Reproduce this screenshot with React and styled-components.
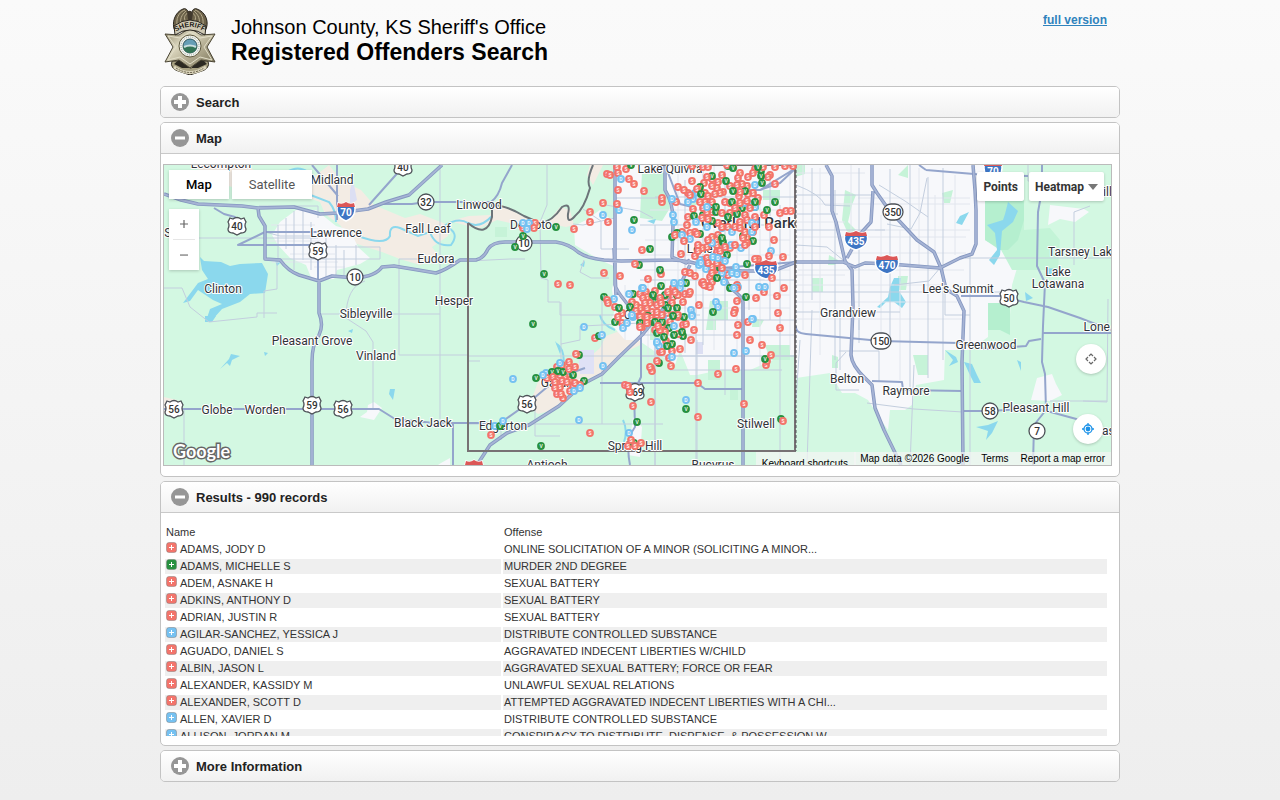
// external
import React, {useState} from 'react';
import styled, {createGlobalStyle} from 'styled-components';

const App = () => {
  return (
    <>
      <GlobalStyle />
      <Page>
        <Header>
          <Badge />
          <Title>
            <small>Johnson County, KS Sheriff's Office</small>
            Registered Offenders Search
          </Title>
          <FullVersion href="#full">full version</FullVersion>
        </Header>
        <Section title="Search" />
        <Section title="Map" defaultOpen>
          <OffenderMap />
        </Section>
        <Section title="Results - 990 records" defaultOpen>
          <Results />
        </Section>
        <Section title="More Information" />
      </Page>
    </>
  );
};

export default App;

const Section = ({title, defaultOpen = false, children}) => {
  const [open, setOpen] = useState(defaultOpen);
  const showBody = open && Boolean(children);
  return (
    <Panel>
      <PanelHeading>
        <PanelButton type="button" aria-expanded={open} $open={showBody} onClick={() => setOpen(!open)}>
          <svg width="18" height="18" viewBox="0 0 18 18" aria-hidden="true">
            <circle cx="9" cy="9" r="9" fill="#969696" />
            <path d={open ? 'M4 9H14' : 'M3 9H15M9 3V15'} stroke="#fff" strokeWidth={open ? 3 : 4} />
          </svg>
          {title}
        </PanelButton>
      </PanelHeading>
      {showBody && <PanelBody>{children}</PanelBody>}
    </Panel>
  );
};

const Badge = () => (
  <svg width="52" height="68" viewBox="0 0 52 68" role="img" aria-label="Sheriff badge">
    <defs>
      <linearGradient id="metal" x1="0" x2="1" y1="0" y2="1">
        <stop offset="0" stopColor="#8a8266" />
        <stop offset=".35" stopColor="#dcd7bf" />
        <stop offset=".6" stopColor="#b5ae93" />
        <stop offset="1" stopColor="#777055" />
      </linearGradient>
    </defs>
    <path d="M11 24C7 16 11 5 19 2C22 1 24 3 24 6L26 4L28 6C28 3 30 1 33 2C42 5 46 16 41 24Z" fill="#6b6149" stroke="#29241c" />
    <path d="M13 17C12 9 17 4 21 3M17 18C15 10 20 6 22 4M22 15C19 11 21 7 24 6M39 17C40 9 35 4 31 3M35 18C37 10 32 6 30 4M30 15C33 11 31 7 28 6" fill="none" stroke="#b8ad8d" strokeWidth="1" />
    <path d="M23 5Q26 2 29 6L28 12Q26 17 24 12Z" fill="#41392d" />
    <path d="M8 54Q5 62 17 65L26 68L35 65Q47 62 44 54Z" fill="#a8a182" stroke="#2f2b23" />
    <path d="M10 57L17 51L23 57L27 62L31 55L37 51L43 57L34 61H18Z" fill="#2c2922" />
    <path d="M1 27L15 28L26 21L37 28L51 27L43 40L51 55L37 53L26 61L15 53L1 55L9 40Z" fill="url(#metal)" stroke="#4a4534" />
    <path d="M4 29L16 31L26 25L36 31L48 29L40 40L48 53L36 50L26 57L16 50L4 53L12 40Z" fill="none" stroke="#e2dec8" />
    <path d="M10 19Q26 7 42 19L41 28Q26 18 11 28Z" fill="#cfc9b4" stroke="#29251e" />
    <path id="arch" d="M12 25Q26 15 41 25" fill="none" />
    <text fontFamily="Liberation Sans, sans-serif" fontSize="7" fontWeight="700" fill="#1d1a15">
      <textPath href="#arch" startOffset="0">SHERIFF</textPath>
    </text>
    <path d="M10 60Q26 71 42 60" fill="none" stroke="#dbd5bd" strokeWidth="3" />
    <path d="M12 61Q26 70 40 61" fill="none" stroke="#69624c" strokeDasharray="2 1" />
    <circle cx="26" cy="39" r="11" fill="#f7f7ef" stroke="#5f593f" />
    <circle cx="26" cy="39" r="9" fill="none" stroke="#899ba1" strokeDasharray="1 1" />
    <circle cx="26" cy="39" r="7" fill="#669eb5" stroke="#31565e" />
    <path d="M19 39H33Q32 46 26 46Q20 46 19 39Z" fill="#337455" />
    <path d="M20 40Q26 37 32 40" fill="none" stroke="#cadfe1" strokeWidth="2" />
  </svg>
);

// pin kinds: S = sex offender, D = drug offender, V = violent offender
const pinColors = {S: '#f3746b', D: '#75c1f1', V: '#279140'};

const pins = {
  V: `631,165 634,220 650,249 639,265 556,227 523,236 515,247 544,274 728,166 733,168 712,176 726,181 758,167 761,171
    761,176 762,183 700,187 701,194 733,191 745,191 732,202 716,207 716,212 703,215 709,210 712,221 755,202 755,207
    742,208 767,210 775,202 728,217 737,214 694,216 700,234 677,233 672,237 722,238 723,242 743,236 753,241 727,255
    747,264 717,278 720,268 730,288 746,297 713,312 684,317 686,283 677,308 668,308 665,305 665,295 653,295 661,286
    660,270 677,295 604,297 619,308 633,294 630,307 655,302 533,324 599,336 615,322 640,323 655,322 657,333 579,355
    552,372 558,371 563,372 536,378 573,375 584,381 659,363 637,422 541,446 500,426 634,443 765,359 686,409 781,419
    672,344 667,346 683,336 682,332 674,335 664,337 663,327 669,328 673,316 653,322 662,322 648,316`,
  D: `621,179 603,215 619,210 632,230 523,223 529,223 527,229 642,288 629,294 755,185 693,199 692,195 695,193 672,199
    673,215 674,222 696,222 707,227 732,232 707,207 745,203 750,204 755,207 752,223 755,222 752,232 722,228 690,239
    682,235 688,202 719,247 712,243 731,245 741,248 722,242 700,260 701,263 713,257 718,258 725,261 699,265 706,269
    722,273 724,282 736,267 732,273 737,274 759,287 765,287 738,287 734,288 771,251 716,302 718,307 691,310 692,316
    681,283 680,288 674,283 643,288 655,300 752,319 614,299 632,315 633,317 584,327 602,335 627,323 623,328 632,316
    657,343 560,363 543,375 546,373 513,379 574,391 580,388 603,366 579,420 495,426 503,421 629,433 753,319 734,353
    746,351 686,400 672,357 657,342 659,346 674,326 692,315 663,317`,
  S: `607,174 610,175 617,167 618,173 626,169 629,179 634,184 644,191 618,190 603,203 590,212 590,222 608,222 617,204
    574,229 642,250 635,264 604,273 620,276 648,279 558,284 570,285 523,228 535,223 534,228 692,166 703,167 708,167
    727,165 733,167 748,177 753,173 763,167 755,169 775,167 785,166 793,166 770,175 775,184 768,177 678,187 684,190
    692,181 707,177 712,179 718,182 704,183 712,186 717,188 730,186 738,178 737,185 722,175 740,173 747,186 742,184
    740,192 739,196 748,194 753,193 723,192 720,193 705,193 708,196 697,189 688,193 690,195 715,194 700,202 705,202
    730,203 725,202 740,203 747,201 735,208 750,208 757,202 758,198 712,202 703,208 722,213 730,213 737,212 745,215
    747,220 740,222 735,227 728,227 722,227 718,223 753,232 755,227 747,237 745,232 740,228 712,212 707,212 702,218
    708,219 688,217 687,225 693,209 676,202 662,198 662,202 675,235 682,232 684,241 690,233 695,232 697,234 681,254
    755,217 764,215 769,227 774,240 769,256 783,257 772,278 784,288 777,296 764,292 756,298 778,313 780,213 786,211
    791,211 755,259 758,259 745,275 737,301 735,310 734,313 699,305 690,292 685,294 689,294 698,245 702,248 698,251
    707,247 708,240 712,237 718,235 716,240 717,245 722,247 720,251 725,247 717,252 730,248 735,245 745,245 743,238
    747,243 695,256 703,260 707,258 708,263 712,267 717,263 722,268 722,260 712,273 710,277 718,275 703,282 704,285
    710,287 707,286 712,282 702,283 685,272 690,273 695,276 717,273 728,275 737,285 737,288 732,288 661,274 673,288
    675,292 668,292 655,291 665,296 673,297 678,295 683,302 647,297 643,298 660,298 645,303 650,303 657,305 661,303
    672,303 647,308 652,312 657,312 643,313 662,315 667,313 673,315 678,317 647,317 640,317 607,300 608,303 615,307
    622,313 618,317 636,305 640,308 632,302 636,311 640,294 646,292 650,297 595,338 622,323 640,327 647,323 660,352
    576,354 569,362 575,367 562,365 557,367 569,369 547,378 553,377 560,375 565,377 570,380 555,382 562,381 567,382
    575,383 580,385 577,388 555,388 560,387 557,394 561,394 563,398 570,391 573,387 651,368 657,361 625,385 628,386
    630,392 633,406 651,402 590,433 491,435 631,440 628,446 635,446 641,443 738,325 748,322 780,328 737,335 750,340
    762,345 771,355 767,361 766,365 736,369 718,374 698,383 698,417 744,404 783,421 671,366 650,367 652,371 669,358
    662,352 672,351 680,349 691,340 678,334 694,330 683,325 686,324 660,330 655,330 665,332 662,325 670,322 678,315
    657,315 643,317 647,323 642,327 651,318 658,326 666,341`,
};

const pinList = Object.entries(pins).flatMap(([kind, list]) =>
  list.trim().split(/\s+/).map((point) => {
    const [x, y] = point.split(',').map(Number);
    return {kind, x, y};
  })
);

// mix the kinds so that no colour lies wholly over another
const order = (pin) => (pin.x * 31 + pin.y * 57) % 101;
pinList.sort((a, b) => order(a) - order(b));

const towns = [
  ['Lecompton', 221, 168], ['Midland', 332, 184], ['Lawrence', 336, 237], ['Fall Leaf', 428, 233], ['Linwood', 479, 209],
  ['Eudora', 436, 263], ['Clinton', 223, 293], ['Hesper', 454, 305], ['Sibleyville', 366, 318], ['Pleasant Grove', 312, 345],
  ['Vinland', 376, 360], ['Globe', 217, 414], ['Worden', 265, 414], ['Black Jack', 423, 427], ['Edgerton', 503, 430],
  ['De Soto', 531, 229], ['Gardner', 562, 387], ['Spring Hill', 635, 450], ['Antioch', 547, 469], ['Bucyrus', 713, 469],
  ['Stilwell', 756, 428], ['Lake Quivira', 670, 173], ['Lenexa', 706, 253], ['Olathe', 641, 319], ['Grandview', 848, 317],
  ['Belton', 847, 383], ['Raymore', 906, 395], ["Lee's Summit", 958, 293], ['Greenwood', 986, 349], ['Pleasant Hill', 1036, 412],
  ['Lake', 1058, 276], ['Lotawana', 1058, 288], ['Tarsney Lake', 1083, 256], ['Lone Jack', 1111, 331], ['Blue Hill', 1090, 196],
  ['Strasburg', 1113, 435], ['Stull', 176, 237],
];

const usRoutes = [['40', 237, 226], ['40', 403, 167], ['59', 318, 251], ['59', 312, 405], ['56', 174, 409], ['56', 343, 409], ['56', 527, 404], ['169', 635, 392], ['50', 1009, 298]];
const stateRoutes = [['32', 426, 202], ['10', 355, 277], ['10', 524, 243], ['350', 893, 212], ['150', 881, 341], ['58', 990, 411], ['7', 1037, 431]];
const interstates = [['70', 346, 211], ['435', 766, 269], ['435', 856, 240], ['470', 887, 264], ['70', 993, 170], ['35', 474, 469]];

const freeways = `M164 194L181 200L198 204L242 206L258 208L294 207L320 214L337 213L368 209L386 202L409 195L442 165
  M258 208L259 216L265 226V259L280 260Q288 271 299 275L319 281L332 276L356 278Q376 276 382 267L394 266L436 273Q446 270 460 260H476
  Q484 258 488 249Q493 242 505 242H556Q569 244 578 252Q586 258 604 260L621 261L672 260Q680 260 690 262L710 267L742 271H773L796 262L843 262L855 267L865 263L890 264L940 268L960 258L972 254L976 244V210L975 190L973 165
  M319 281V313Q324 325 319 335Q312 344 312 362V465
  M615 165V285Q616 290 625 301L640 320M616 295L614 248
  M665 165L665 190Q674 204 673 225L672 257L686 263L690 260M690 265L680 285L660 313L643 334L620 356L602 374L583 384L559 406L529 425L507 433L490 445L477 465
  M826 165L832 176V211L836 222L845 261L852 270L853 306L851 355Q852 366 865 378L872 385L875 408L884 430L901 465
  M872 165V185L877 193L889 210L917 240L934 252L941 268L946 289L957 296L964 311L962 362L963 465
  M743 465V302Q742 296 730 288L724 276L722 268
  M873 191L871 222L861 233L847 258`;

const highways = `M312 165L338 196M337 165V220M164 409H379L395 419L434 423H468M453 423V465M318 245V281M318 281V245H238L265 232H318
  M214 208L224 214L235 217L242 229M369 205L402 168M379 204H412L426 202H491Q499 196 502 183L512 165
  M503 421L527 404L546 388L568 374L585 368M634 392L641 377V325M634 392L635 427Q625 440 630 465
  M468 423H503M600 383H697L705 389H744M796 326Q795 333 806 334L881 341L958 343L986 349L1026 346L1029 341L1041 339
  M961 296H1001L1024 302L1048 307L1080 318L1111 330M1042 165V190L1038 212L1037 266L1045 283L1043 326L1042 362L1045 374L1046 410L1034 425L1033 465
  M1043 333H1111M963 411L990 411L1036 408L1080 420M872 381L902 382L903 390L962 391
  M926 170L986 175L1028 176M926 170L919 165M720 268L796 262M796 168L760 190H745L738 195M665 165L680 204L696 208M760 190L780 183L796 168`;

const streets = `M259 206H318V218M265 232L280 236H313M278 225V258M286 218V249M294 211V270M303 211V260M311 222V270M326 231V279M336 245V275M344 250V275M356 245V265
  M265 259H380V247H325M265 259L277 260L277 289L264 291V318M164 288H182L190 307L209 322L257 317V313H277
  M399 259V355H468M440 165V419M365 281Q346 287 346 318L366 331L373 342V409M321 314H440M399 259H430L440 261
  M177 238H318M184 409V465M547 165V205L540 222L541 278L548 280V302L560 302V315H700M525 259H510L468 261
  M561 302V374M480 361H468M468 356H796M580 326V340L561 344M583 326L640 323M602 300V424M468 424H663M501 425V440M535 410V436H560
  M640 320H797M655 225V465M696 260V465M725 165V395M780 205V465M796 292H1000M796 312H900M640 335H795M640 356H795M655 339V465
  M670 370H782M665 383H700M697 340V465M796 195H872M796 214H838M796 230H885M812 168V300M835 190V360M859 168V330M890 169V340M910 165V390
  M928 177V378M943 168V360M970 255V465M945 289V315H970M965 258H1111M1028 165V181H1074V195M1074 265V212L1090 206M1108 299L1107 402L1083 401
  M1050 401H1107M846 352L836 363V390H859M839 351H879V382M840 318V370M812 310L807 465M859 320V343M914 365L910 465
  M867 403L914 409L963 412M800 340L796 400M770 180V320M749 182V310M703 165V345M685 180V353M640 280H795M640 225H795M655 197H795M615 198H665
  M796 185Q820 194 825 205L850 206M796 245L827 247L843 260M879 185L905 201L928 217M887 224L911 229L920 213L927 178M894 285L929 281L940 268
  M615 218L583 225L573 224M600 204L640 211L653 218M583 209L601 221V249H629M584 260L580 272L591 278H609`;

const localGrid = `M803 165V330M820 168V355M851 165V255M881 215V335M900 230V380M919 168V267M935 195V250M955 175V255M796 173H865M796 204H970
  M796 222H845M796 237H966M796 253H966M796 275H845M796 285H946M796 302H957M796 319H965M858 198H970M875 230H970M798 270H964
  M678 165V340M714 165V350M737 165V350M760 200V370M790 165V350M650 210H790M645 240H790M640 255H790M640 270H790M640 295H790M640 308H790
  M625 285V340M648 280V360M665 280V360M612 310H680M271 225H315M267 241H320M290 254H335M272 262H338M314 267H345`;

const OffenderMap = () => (
  <MapBox>
    <MapDrawing viewBox="164 165 947 300" preserveAspectRatio="xMidYMid slice" role="img" aria-label="Map of Johnson County">
      <rect x="164" y="165" width="947" height="300" fill="#d3f8e2" />
      <g fill="#f3ece4">
        <path d="M192 165H245L258 172L280 180L315 176L329 165L342 181L361 190L374 205L405 218L420 214L446 224L448 236L432 247L440 258L420 265L400 259L382 252L354 243L340 225L325 214L320 202L300 195L245 190L220 184Z" />
        <path d="M450 221L469 216L490 215L493 205L502 205L524 217L548 222L560 207L570 210L574 225L566 227L545 223H510L497 220L480 228L468 226Z" />
        <path d="M590 165H603L593 185L587 175ZM540 376L585 361L600 348L606 336L625 329L643 329L640 345L620 355L600 374L580 382L553 410L538 414L529 407Z" />
        <path d="M164 397L177 400L181 406L178 414H164Z" />
      </g>
      <g fill="#f7f8fb">
        <path d="M296 210H316L336 226L350 230L358 247L370 258L360 264L337 270L334 279L312 280L306 265L290 258L278 245L272 235L280 222Z" />
        <path d="M574 226L586 220L600 210L609 218H616V165H985V230H1020V258L1012 285L1010 315L988 316V337L970 350L945 350L944 380L916 385L912 405L905 410H890L888 430L881 420L868 400L855 393H842L830 373L796 378V355H785L750 370H720L697 375H690L680 350L675 365L660 355L638 340L625 340L610 323L615 310L612 290L616 267L600 260L575 245Z" />
        <path d="M1037 378L1052 374L1056 384L1062 395L1050 401L1031 400Z" />
        <path d="M368 405L374 402L382 408L374 420L360 417L367 412ZM441 463L450 458V465H438ZM633 417L642 427L640 457L628 455Z" />
      </g>
      <path d="M578 350H594V374H580Z" fill="#dfe1f6" />
      <path d="M696 342H703V354H696ZM350 190L353 180L357 200L350 205Z" fill="#dcdff3" />
      <g fill="#c6f3d8">
        <path d="M642 171L664 170L670 208L662 221L640 218ZM710 301H728V320H716V330H706ZM690 198H698V205H690ZM845 190L856 195L852 205L848 222L856 230L849 236L842 220ZM829 255L838 260L835 265H828Z" />
        <path d="M796 165H805V174L795 177ZM898 175L908 165V178ZM942 193L953 190L950 203H944ZM898 276H908L906 290H898ZM812 278H823V292H812ZM832 355L838 357V368H832ZM913 355H928V375H918ZM763 190H780V200H763ZM765 345H790V360H770ZM495 227H507V237H495Z" />
        <path d="M650 320H660V340H650ZM730 390H738V400H730ZM708 360H720V380H708ZM753 318L764 320L760 327H752Z" />
      </g>
      <path d="M985 200H1024V230L1050 228L1060 240L1058 270H1012L1000 248L985 240Z" fill="#c3f4d7" />
      <path d="M985 200H1024V220L1018 240L1008 250H1000L985 240ZM988 303H1010V335L1000 330H988Z" fill="#b5efcf" />
      <path d="M1050 205L1084 209L1089 212L1075 222L1060 219L1048 225Z" fill="#f7f8fb" />
      <g fill="#8bd8ed">
        <path d="M200 257L204 261L221 262L230 266L240 264L262 263L268 274L265 293L250 294L240 302L222 309L213 319L207 318L210 309L222 304L213 300L198 290L190 301L183 303L189 295L198 283L208 279L202 270Z" />
        <path d="M894 278L901 278L899 291L906 302L902 308L894 302L886 302L880 308L877 307L888 297L890 287Z" />
        <path d="M1005 214L1008 202L1018 211L1013 222L1002 231L1000 255L994 265L989 260L997 250L995 233L987 225L1003 220Z" />
        <path d="M964 362L972 364L977 375L981 383H974L969 373ZM945 350L956 357L958 362L949 366L953 360ZM976 427L988 425L998 421L992 433L986 440L988 431ZM231 354L240 356L232 360L230 366L227 363L220 369L229 359ZM390 389H395L393 400L389 394ZM205 316H216L212 322H205ZM960 216L969 212L962 225L956 223Z" />
        <path d="M647 221L656 219L654 224ZM580 265L585 261L584 267ZM348 331L353 329L352 333ZM264 352L268 353L265 356ZM274 258L281 262L277 266ZM1046 268L1058 269L1054 276L1046 274ZM1025 292L1033 298L1026 301ZM1017 360L1021 362V371ZM555 341L562 349L560 354Z" />
      </g>
      <path d="M287 172Q298 165 308 172M308 194L329 202Q336 210 336 222M358 236Q385 246 390 236Q389 224 400 228L418 236L430 232Q435 247 451 245Q461 232 444 226Q458 217 468 223M468 223Q480 229 492 216M557 344Q566 350 563 370M623 420Q628 430 624 442M618 448L625 445M600 315Q602 325 615 330" fill="none" stroke="#8bd8ed" strokeWidth="2" />
      <path d={localGrid} fill="none" stroke="#e2e6ee" />
      <path d={streets} fill="none" stroke="#c3cede" />
      <path d={highways} fill="none" stroke="#94a5cc" strokeWidth="2" strokeLinejoin="round" />
      <path d={freeways} fill="none" stroke="#8597c0" strokeWidth="3.5" strokeLinejoin="round" />
      <path d={freeways} fill="none" stroke="#a6b4d5" strokeWidth="1.8" strokeLinejoin="round" />
      <path d="M468 223Q487 239 492 217V205Q506 205 524 216L540 223Q552 222 562 207Q571 202 568 214Q567 225 575 216Q584 209 590 188Q586 181 593 165" fill="none" stroke="#6c7479" strokeWidth="2" />
      <path d="M468 223L468 451H795V165M796 165H655" fill="none" stroke="#777174" strokeWidth="2" />
      <path d="M796 165V451" fill="none" stroke="#535559" strokeWidth="1" strokeDasharray="3 2" />

      {towns.map(([name, x, y]) => <TownLabel key={name} x={x} y={y}>{name}</TownLabel>)}
      <CityLabel x="748" y="228">Overland Park</CityLabel>

      {usRoutes.map(([number, x, y]) => (
        <g key={number + x} transform={`translate(${x} ${y})`}>
          <path d="M-7-8L-4-7Q0-10 4-7L7-8L9-4Q7-1 9 3Q9 7 4 7L0 9L-4 7Q-9 7-9 3Q-7-1-9-4Z" fill="#fff" stroke="#4d5157" strokeWidth="1.3" />
          <RouteNumber y="4">{number}</RouteNumber>
        </g>
      ))}
      {stateRoutes.map(([number, x, y]) => (
        <g key={number + x} transform={`translate(${x} ${y})`}>
          <rect x={number.length > 2 ? -10 : -8} y="-8" width={number.length > 2 ? 20 : 16} height="16" rx="8" fill="#fff" stroke="#4d5157" strokeWidth="1.3" />
          <RouteNumber y="4">{number}</RouteNumber>
        </g>
      ))}
      {interstates.map(([number, x, y]) => (
        <g key={number + x} transform={`translate(${x} ${y})`}>
          {number.length > 2 ? (
            <>
              <path d="M-10-8Q-5-6 0-9Q5-6 10-8Q16 5 0 10Q-16 5-10-8Z" fill="#3d75c4" stroke="#fff" strokeWidth="1.5" />
              <path d="M-10-8Q-5-6 0-9Q5-6 10-8L11-4H-11Z" fill="#dc5757" />
            </>
          ) : (
            <>
              <path d="M-8-8Q-4-6 0-9Q4-6 8-8Q12 5 0 10Q-12 5-8-8Z" fill="#3d75c4" stroke="#fff" strokeWidth="1.5" />
              <path d="M-8-8Q-4-6 0-9Q4-6 8-8L9-4H-9Z" fill="#dc5757" />
            </>
          )}
          <ShieldNumber y="5">{number}</ShieldNumber>
        </g>
      ))}

      {pinList.map(({kind, x, y}) => (
        <g key={`${kind}${x},${y}`}>
          <circle cx={x} cy={y} r="3.9" fill={pinColors[kind]} />
          <PinLetter x={x} y={y + 2}>{kind}</PinLetter>
        </g>
      ))}
    </MapDrawing>

    <MapTypes>
      <MapButton type="button" $active>Map</MapButton>
      <MapButton type="button">Satellite</MapButton>
    </MapTypes>
    <ZoomControl>
      <button type="button" aria-label="Zoom in"><Glyph d="M5 9H13M9 5V13" /></button>
      <button type="button" aria-label="Zoom out"><Glyph d="M5 9H13" /></button>
    </ZoomControl>
    <LayerButtons>
      <LayerButton type="button">Points</LayerButton>
      <LayerButton type="button">
        Heatmap
        <svg width="10" height="6" viewBox="0 0 10 6" aria-hidden="true"><path d="M0 0H10L5 6Z" fill="#777" /></svg>
      </LayerButton>
    </LayerButtons>
    <CameraButton type="button" aria-label="Map camera controls">
      <Glyph d="M7 6L9 4L11 6M12 7L14 9L12 11M11 12L9 14L7 12M6 11L4 9L6 7" />
    </CameraButton>
    <LocateButton type="button" aria-label="Show my location">
      <svg width="14" height="14" viewBox="0 0 14 14" aria-hidden="true">
        <circle cx="7" cy="7" r="4" fill="none" stroke="#1a91e8" strokeWidth="1.3" />
        <circle cx="7" cy="7" r="2.4" fill="#1a91e8" />
        <path d="M7 1V3M7 11V13M1 7H3M11 7H13" stroke="#1a91e8" strokeWidth="1.3" />
      </svg>
    </LocateButton>
    <GoogleMark href="#google">Google</GoogleMark>
    <Shortcuts type="button">Keyboard shortcuts</Shortcuts>
    <Credits>
      <span>Map data ©2026 Google</span>
      <a href="#terms">Terms</a>
      <a href="#report">Report a map error</a>
    </Credits>
  </MapBox>
);

const Glyph = ({d}) => (
  <svg width="18" height="18" viewBox="0 0 18 18" aria-hidden="true">
    <path d={d} fill="none" stroke="#666" strokeWidth="1.2" />
  </svg>
);

const offenders = [
  ['S', 'ADAMS, JODY D', 'ONLINE SOLICITATION OF A MINOR (SOLICITING A MINOR...'],
  ['V', 'ADAMS, MICHELLE S', 'MURDER 2ND DEGREE'],
  ['S', 'ADEM, ASNAKE H', 'SEXUAL BATTERY'],
  ['S', 'ADKINS, ANTHONY D', 'SEXUAL BATTERY'],
  ['S', 'ADRIAN, JUSTIN R', 'SEXUAL BATTERY'],
  ['D', 'AGILAR-SANCHEZ, YESSICA J', 'DISTRIBUTE CONTROLLED SUBSTANCE'],
  ['S', 'AGUADO, DANIEL S', 'AGGRAVATED INDECENT LIBERTIES W/CHILD'],
  ['S', 'ALBIN, JASON L', 'AGGRAVATED SEXUAL BATTERY; FORCE OR FEAR'],
  ['S', 'ALEXANDER, KASSIDY M', 'UNLAWFUL SEXUAL RELATIONS'],
  ['S', 'ALEXANDER, SCOTT D', 'ATTEMPTED AGGRAVATED INDECENT LIBERTIES WITH A CHI...'],
  ['D', 'ALLEN, XAVIER D', 'DISTRIBUTE CONTROLLED SUBSTANCE'],
  ['D', 'ALLISON, JORDAN M', 'CONSPIRACY TO DISTRIBUTE, DISPENSE, & POSSESSION W...'],
];

const Results = () => (
  <Scroller>
    <Table>
      <thead>
        <tr>
          <th scope="col">Name</th>
          <th scope="col">Offense</th>
        </tr>
      </thead>
      <tbody>
        {offenders.map(([kind, name, offense]) => (
          <tr key={name}>
            <td>
              <NameCell>
                <svg width="11" height="11" viewBox="0 0 11 11" aria-hidden="true">
                  <rect x=".5" y=".5" width="10" height="10" rx="2.5" fill={pinColors[kind]} stroke="#777" strokeOpacity=".45" />
                  <path d="M3 5.5H8M5.5 3V8" stroke="#fff" strokeWidth="1" />
                </svg>
                {name}
              </NameCell>
            </td>
            <td>{offense}</td>
          </tr>
        ))}
      </tbody>
    </Table>
  </Scroller>
);

const GlobalStyle = createGlobalStyle`
  body {
    margin: 0;
    min-height: 100vh;
    background: linear-gradient(#fafafa, #eeeeee);
    color: #333;
    font-family: "Liberation Sans", Arial, sans-serif;
  }

  * {
    box-sizing: border-box;
  }

  button {
    font-family: inherit;
    cursor: pointer;
  }
`;

const Page = styled.main`
  max-width: 960px;
  margin: 0 auto;
  display: flex;
  flex-direction: column;
  gap: 4px;
`;

const Header = styled.header`
  display: flex;
  align-items: flex-start;
  min-height: 82px;
  padding: 7px 13px 0 4px;
`;

const Title = styled.h1`
  flex: 1;
  margin: 8px 0 0 15px;
  font-size: 23px;
  line-height: 26px;
  color: #000;

  small {
    display: block;
    font-size: 20px;
    line-height: 24px;
    font-weight: 400;
  }
`;

const FullVersion = styled.a`
  margin-top: 6px;
  font-size: 12px;
  line-height: 14px;
  font-weight: 700;
  color: #2f83bd;
`;

const Panel = styled.section`
  border: 1px solid #c3c3c3;
  border-radius: 5px;
  background: #fff;
  overflow: hidden;
`;

const PanelHeading = styled.h2`
  margin: 0;
  font-size: 13px;
`;

const PanelButton = styled.button`
  display: flex;
  align-items: center;
  gap: 7px;
  width: 100%;
  height: ${(props) => (props.$open ? '31px' : '30px')};
  padding: 0 10px;
  border: 0;
  border-bottom: ${(props) => (props.$open ? '1px solid #c9c9c9' : '0')};
  background: linear-gradient(#ffffff, #f1f1f1);
  color: #222;
  font-size: 13px;
  font-weight: 700;
`;

const PanelBody = styled.div`
  padding: 10px 7px 10px 2px;
`;

const MapBox = styled.div`
  position: relative;
  height: 302px;
  border: 1px solid #bbb;
  overflow: hidden;
  font-family: Roboto, sans-serif;
`;

const MapDrawing = styled.svg`
  display: block;
  width: 100%;
  height: 100%;
`;

const MapText = styled.text`
  font-family: Roboto, sans-serif;
  text-anchor: middle;
`;

const TownLabel = styled(MapText)`
  font-size: 12px;
  fill: #303338;
  stroke: #fff;
  stroke-width: 2px;
  stroke-linejoin: round;
  paint-order: stroke;
`;

const CityLabel = styled(TownLabel)`
  font-size: 15px;
  font-weight: 500;
`;

const RouteNumber = styled(MapText)`
  font-size: 10px;
  font-weight: 500;
  fill: #333;
`;

const ShieldNumber = styled(MapText)`
  font-size: 10px;
  font-weight: 700;
  fill: #fff;
`;

const PinLetter = styled(MapText)`
  font-size: 5px;
  font-weight: 500;
  fill: #fff;
`;

const MapTypes = styled.div`
  position: absolute;
  top: 5px;
  left: 5px;
  display: flex;
  gap: 3px;
`;

const MapButton = styled.button`
  height: 29px;
  padding: 0 17px;
  border: 0;
  background: #fff;
  box-shadow: 0 1px 3px rgba(0, 0, 0, 0.2);
  color: ${(props) => (props.$active ? '#000' : '#565656')};
  font-family: Roboto, sans-serif;
  font-size: 13px;
  font-weight: ${(props) => (props.$active ? 500 : 400)};
`;

const ZoomControl = styled.div`
  position: absolute;
  top: 44px;
  left: 5px;
  width: 30px;
  background: #fff;
  box-shadow: 0 1px 3px rgba(0, 0, 0, 0.2);

  button {
    display: grid;
    place-items: center;
    width: 22px;
    height: 30px;
    margin: 0 4px;
    padding: 0;
    border: 0;
    background: none;
  }

  button + button {
    height: 31px;
    border-top: 1px solid #e6e6e6;
  }
`;

const LayerButtons = styled.div`
  position: absolute;
  top: 7px;
  right: 7px;
  display: flex;
  gap: 5px;
`;

const LayerButton = styled.button`
  display: flex;
  align-items: center;
  gap: 4px;
  height: 29px;
  padding: 0 6px;
  border: 0;
  border-radius: 2px;
  background: #fff;
  box-shadow: 0 1px 3px rgba(0, 0, 0, 0.2);
  color: #333;
  font-size: 12px;
  font-weight: 700;
`;

const RoundButton = styled.button`
  position: absolute;
  display: grid;
  place-items: center;
  width: 30px;
  height: 30px;
  padding: 0;
  border: 0;
  border-radius: 50%;
  background: #fff;
  box-shadow: 0 1px 3px rgba(0, 0, 0, 0.2);
`;

const CameraButton = styled(RoundButton)`
  right: 5px;
  bottom: 91px;
`;

const LocateButton = styled(RoundButton)`
  right: 8px;
  bottom: 21px;
`;

const GoogleMark = styled.a`
  position: absolute;
  left: 9px;
  bottom: 2px;
  font-family: Lato, sans-serif;
  font-size: 18px;
  line-height: 24px;
  font-weight: 700;
  color: #fff;
  text-decoration: none;
  -webkit-text-stroke: 3px #666;
  paint-order: stroke fill;
`;

const Shortcuts = styled.button`
  position: absolute;
  right: 255px;
  bottom: -10px;
  height: 23px;
  padding: 0 8px 0 6px;
  border: 0;
  background: rgba(245, 245, 245, 0.7);
  color: #000;
  font-family: "Liberation Sans", Arial, sans-serif;
  font-size: 10px;
`;

const Credits = styled.div`
  position: absolute;
  right: 0;
  bottom: 0;
  display: flex;
  gap: 12px;
  padding: 0 6px;
  background: rgba(245, 245, 245, 0.7);
  color: #000;
  font-family: "Liberation Sans", Arial, sans-serif;
  font-size: 10px;
  line-height: 13px;

  a {
    color: inherit;
    text-decoration: none;
  }
`;

const Scroller = styled.div`
  height: 213px;
  margin-bottom: -1px;
  padding-right: 3px;
  overflow-y: auto;
  scrollbar-width: none;
`;

const Table = styled.table`
  width: 100%;
  table-layout: fixed;
  border-spacing: 2px;
  font-size: 11px;
  line-height: 15px;

  th,
  td {
    padding: 0 1px;
    font-weight: 400;
    text-align: left;
    white-space: nowrap;
  }

  th:first-child {
    width: 336px;
  }

  tbody tr:nth-child(even) td {
    background: #efefef;
  }
`;

const NameCell = styled.span`
  display: flex;
  align-items: flex-start;
  gap: 3px;
  height: 15px;
`;
